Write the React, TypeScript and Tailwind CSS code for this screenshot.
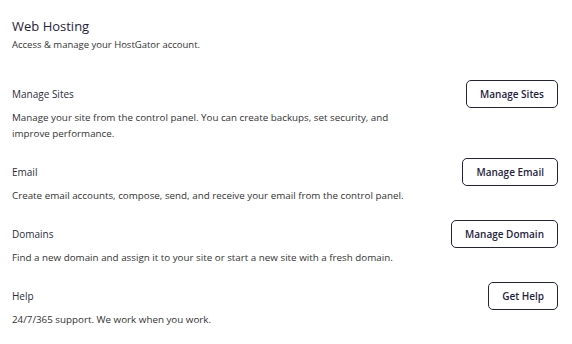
import React from "react";

const sections = [
  {
    label: "Manage Sites",
    button: "Manage Sites",
    desc: "Manage your site from the control panel. You can create backups, set security, and improve performance.",
  },
  {
    label: "Email",
    button: "Manage Email",
    desc: "Create email accounts, compose, send, and receive your email from the control panel.",
  },
  {
    label: "Domains",
    button: "Manage Domain",
    desc: "Find a new domain and assign it to your site or start a new site with a fresh domain.",
  },
  {
    label: "Help",
    button: "Get Help",
    desc: "24/7/365 support. We work when you work.",
  },
];

export default function App() {
  return (
    <div
      className="w-[572px] h-[344px] bg-white pl-3 pr-[14px] pt-4 text-[#333333]"
      style={{ fontFamily: '"Open Sans", "Noto Sans", sans-serif' }}
    >
      <h1 className="text-[13px] leading-5 font-medium text-[#1f2340]">Web Hosting</h1>
      <p className="text-[9.5px] leading-4 mt-px">Access &amp; manage your HostGator account.</p>
      <div className="mt-[27px] flex flex-col gap-4">
        {sections.map((s) => (
          <div key={s.label}>
            <div className="flex items-center justify-between h-7">
              <span className="text-[10px] font-medium text-[#2d2d3a]">{s.label}</span>
              <button className="h-7 px-[13px] border border-[#1f2340] rounded-[5px] text-[10px] font-semibold text-[#1f2340] bg-white">
                {s.button}
              </button>
            </div>
            <p className="mt-0.5 text-[9.8px] leading-4 max-w-[395px]">{s.desc}</p>
          </div>
        ))}
      </div>
    </div>
  );
}
